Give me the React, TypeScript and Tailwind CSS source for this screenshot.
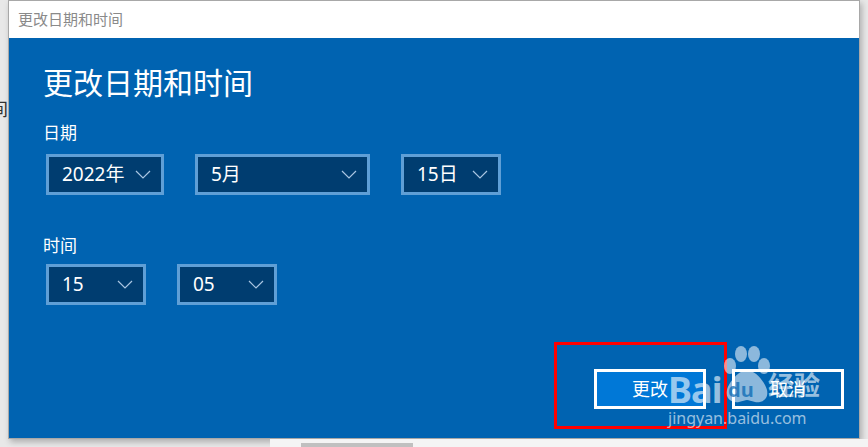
const FONT = { fontFamily: '"Noto Sans", "Noto Sans CJK SC", sans-serif' };

function Chevron() {
  return (
    <svg width="16" height="9" viewBox="0 0 16 9" fill="none" className="shrink-0">
      <path d="M1 1l7 7 7-7" stroke="#a9c6e2" strokeWidth="1.2" />
    </svg>
  );
}

function Select({ value, width }: { value: string; width: string }) {
  return (
    <div
      className={`${width} flex h-[41px] items-center justify-between border-[3px] border-[#5f9fd6] bg-[#003d70] pl-[13px] pr-[10px] text-[19px] text-white`}
    >
      <span className="leading-none">{value}</span>
      <Chevron />
    </div>
  );
}

function Watermark() {
  return (
    <div className="pointer-events-none absolute left-[664px] top-[346px] h-[82px] w-[170px] text-white/60">
      <div className="absolute left-[4px] top-[26px] text-[36px] font-bold leading-none tracking-tight">Bai</div>
      <svg className="absolute left-[56px] top-[0px]" width="52" height="58" viewBox="0 0 52 58">
        <g fill="rgba(255,255,255,0.55)">
          <ellipse cx="10" cy="20" rx="6" ry="8" />
          <ellipse cx="21" cy="8" rx="6" ry="8" />
          <ellipse cx="34" cy="8" rx="6" ry="8" />
          <ellipse cx="44" cy="20" rx="6" ry="8" />
          <path d="M27 24c-8 0-18 12-20 20-2 10 6 13 12 12 4-1 6-2 8-2s4 1 8 2c6 1 14-2 12-12-2-8-12-20-20-20z" />
        </g>
      </svg>
      <div className="absolute left-[64px] top-[34px] text-[20px] font-bold leading-none text-[#0063b1]/70">du</div>
      <div className="absolute left-[104px] top-[26px] text-[26px] font-bold leading-none">经验</div>
      <div className="absolute left-[4px] top-[64px] text-[16px] leading-none">jingyan.baidu.com</div>
    </div>
  );
}

export default function App() {
  return (
    <div className="relative flex h-[447px] w-[868px] overflow-hidden bg-[#e8e8e8]" style={FONT}>
      <div className="w-[8px] shrink-0 overflow-hidden pt-[100px] text-[18px] leading-none text-[#333]">
        <span className="-ml-[10px] block">间</span>
      </div>

      <div className="flex h-[439px] w-[852px] shrink-0 flex-col border border-[#a8a8a8] shadow-[2px_3px_6px_rgba(0,0,0,0.25)]">
        <div className="flex h-[37px] shrink-0 items-center bg-white pl-[9px] text-[15px] text-[#8a8a8a]">
          更改日期和时间
        </div>
        <div className="relative flex flex-1 flex-col bg-[#0063b1] pl-[34px] text-white">
          <div className="mt-[26px] text-[30px] leading-[38px]">更改日期和时间</div>
          <div className="mt-[19px] text-[17px] leading-[24px]">日期</div>
          <div className="mt-[9px] flex gap-[31px] pl-[3px]">
            <Select value="2022年" width="w-[118px]" />
            <Select value="5月" width="w-[175px]" />
            <Select value="15日" width="w-[100px]" />
          </div>
          <div className="mt-[39px] text-[17px] leading-[24px]">时间</div>
          <div className="mt-[6px] flex gap-[31px] pl-[3px]">
            <Select value="15" width="w-[100px]" />
            <Select value="05" width="w-[100px]" />
          </div>
          <div className="mt-[64px] flex justify-end gap-[26px] pr-[15px]">
            <button className="flex h-[40px] w-[112px] items-center justify-center border-[3px] border-white bg-[#0078d7] text-[18px] text-white">
              更改
            </button>
            <button className="flex h-[40px] w-[112px] items-center justify-center border-[3px] border-white bg-[#0063b1] text-[18px] text-white">
              取消
            </button>
          </div>
        </div>
      </div>

      <div className="absolute bottom-0 left-[270px] h-[8px] w-[598px] bg-[#f4f4f4]">
        <div className="ml-[31px] mt-[4px] h-[4px] w-[112px] bg-[#c0c0c0]" />
      </div>

      <div className="pointer-events-none absolute left-[554px] top-[342px] h-[87px] w-[173px] border-[3px] border-[#ff0000]" />
      <Watermark />
    </div>
  );
}
